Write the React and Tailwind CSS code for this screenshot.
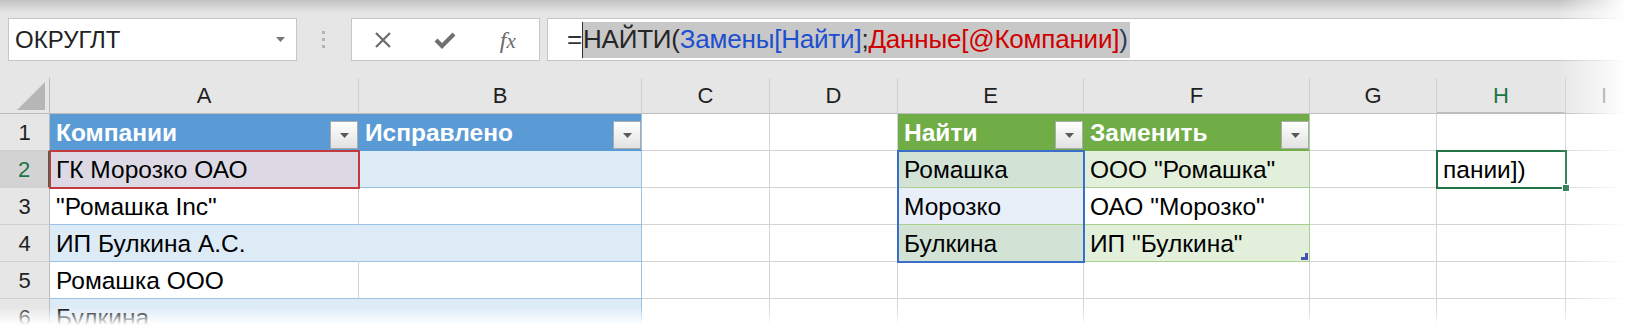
import React from "react";

// colours taken from the Excel screenshot
const W = "bg-white border-r-[#d4d4d4] border-b-[#d4d4d4]";

const columns = [
  { name: "A", cls: "" },
  { name: "B", cls: "" },
  { name: "C", cls: "" },
  { name: "D", cls: "" },
  { name: "E", cls: "" },
  { name: "F", cls: "" },
  { name: "G", cls: "" },
  { name: "H", cls: "bg-[#d2d2d2] text-[#217346] border-b-2 border-b-[#217346]" },
  { name: "I", cls: "" },
];

const rows = [
  [
    { t: "Компании", c: "bg-[#5b9bd5] border-r-[#5b9bd5] border-b-[#5b9bd5] font-bold text-white", dd: true },
    { t: "Исправлено", c: "bg-[#5b9bd5] border-r-[#9bc2e6] border-b-[#5b9bd5] font-bold text-white", dd: true },
    { c: W },
    { c: W },
    { t: "Найти", c: "bg-[#70ad47] border-r-[#70ad47] border-b-[#70ad47] font-bold text-white", dd: true },
    { t: "Заменить", c: "bg-[#70ad47] border-r-[#a9d08e] border-b-[#70ad47] font-bold text-white", dd: true },
    { c: W },
    { c: W },
    { c: W },
  ],
  [
    { t: "ГК Морозко ОАО", c: "bg-[#dcd9e5] border-r-[#dcd9e5] border-b-[#9bc2e6]" },
    { c: "bg-[#ddebf7] border-r-[#9bc2e6] border-b-[#9bc2e6]" },
    { c: W },
    { c: W },
    { t: "Ромашка", c: "bg-[#d2e3d6] border-r-[#a9d08e] border-b-[#a9d08e]" },
    { t: 'ООО "Ромашка"', c: "bg-[#e2efda] border-r-[#a9d08e] border-b-[#a9d08e]" },
    { c: W },
    { t: "пании])", c: W },
    { c: W },
  ],
  [
    { t: '"Ромашка Inc"', c: "bg-white border-r-[#d4d4d4] border-b-[#9bc2e6]" },
    { c: "bg-white border-r-[#9bc2e6] border-b-[#9bc2e6]" },
    { c: W },
    { c: W },
    { t: "Морозко", c: "bg-[#e9eff9] border-r-[#a9d08e] border-b-[#a9d08e]" },
    { t: 'ОАО "Морозко"', c: "bg-white border-r-[#a9d08e] border-b-[#a9d08e]" },
    { c: W },
    { c: W },
    { c: W },
  ],
  [
    { t: "ИП Булкина А.С.", c: "bg-[#ddebf7] border-r-[#ddebf7] border-b-[#9bc2e6]" },
    { c: "bg-[#ddebf7] border-r-[#9bc2e6] border-b-[#9bc2e6]" },
    { c: W },
    { c: W },
    { t: "Булкина", c: "bg-[#d2e3d6] border-r-[#a9d08e] border-b-[#a9d08e]" },
    { t: 'ИП "Булкина"', c: "bg-[#e2efda] border-r-[#a9d08e] border-b-[#a9d08e]", handle: true },
    { c: W },
    { c: W },
    { c: W },
  ],
  [
    { t: "Ромашка ООО", c: "bg-white border-r-[#d4d4d4] border-b-[#9bc2e6]" },
    { c: "bg-white border-r-[#9bc2e6] border-b-[#9bc2e6]" },
    { c: W },
    { c: W },
    { c: W },
    { c: W },
    { c: W },
    { c: W },
    { c: W },
  ],
  [
    { t: "Булкина", c: "bg-[#ddebf7] border-r-[#ddebf7] border-b-[#9bc2e6]" },
    { c: "bg-[#ddebf7] border-r-[#9bc2e6] border-b-[#9bc2e6]" },
    { c: W },
    { c: W },
    { c: W },
    { c: W },
    { c: W },
    { c: W },
    { c: W },
  ],
];

const Triangle = ({ color = "#595959" }) => (
  <svg width="9" height="5" viewBox="0 0 9 5">
    <polygon points="0,0 9,0 4.5,5" fill={color} />
  </svg>
);

const FilterButton = () => (
  <div className="ml-auto mb-[1px] flex h-[28px] w-[28px] shrink-0 items-center justify-center self-end border border-[#ababab] bg-gradient-to-b from-white to-[#e2e2e2]">
    <Triangle />
  </div>
);

const Cell = ({ cell }) => (
  <div
    className={`relative flex items-center whitespace-nowrap border-r border-b pl-[6px] pt-[3px] text-[24.5px] leading-none text-black ${cell.c}`}
  >
    <span className={cell.dd ? "pb-[1px]" : ""}>{cell.t}</span>
    {cell.dd && <FilterButton />}
    {cell.handle && (
      <svg className="absolute right-[1px] bottom-[1px]" width="7" height="7" viewBox="0 0 7 7">
        <polygon points="7,0 7,7 0,7 0,4 4,4 4,0" fill="#4653b3" />
      </svg>
    )}
  </div>
);

const FormulaBar = () => (
  <div className="flex h-[78px] items-start bg-[linear-gradient(to_bottom,#c2c2c2,#e6e6e6_13px)] pt-[18px]">
    {/* name box */}
    <div className="ml-[8px] flex h-[43px] w-[289px] items-center border border-[#c6c6c6] bg-white pl-[6px] pr-[11px]">
      <span className="text-[24px] text-[#222]">ОКРУГЛТ</span>
      <span className="ml-auto">
        <Triangle color="#777" />
      </span>
    </div>

    {/* grip dots */}
    <div className="ml-[25px] flex h-[43px] flex-col items-center justify-center gap-[4px]">
      <span className="h-[3px] w-[3px] bg-[#b5b5b5]" />
      <span className="h-[3px] w-[3px] bg-[#b5b5b5]" />
      <span className="h-[3px] w-[3px] bg-[#b5b5b5]" />
    </div>

    {/* cancel / enter / fx */}
    <div className="ml-[26px] grid h-[43px] w-[189px] grid-cols-3 items-center border border-[#c6c6c6] bg-white">
      <div className="flex justify-center">
        <svg width="18" height="18" viewBox="0 0 18 18">
          <path d="M2 2 L16 16 M16 2 L2 16" stroke="#6b6b6b" strokeWidth="2.2" />
        </svg>
      </div>
      <div className="flex justify-center">
        <svg width="22" height="18" viewBox="0 0 22 18">
          <path d="M2 9 L8 15 L20 3" stroke="#707070" strokeWidth="4.2" fill="none" strokeLinejoin="miter" />
        </svg>
      </div>
      <div className="flex items-baseline justify-center font-['Liberation_Serif',serif] text-[24px] italic leading-none text-[#6b6b6b]">
        <span>f</span>
        <span className="text-[21px]">x</span>
      </div>
    </div>

    {/* formula */}
    <div className="ml-[7px] flex h-[43px] flex-1 items-center border border-[#c6c6c6] bg-white pl-[19px] text-[26px] tracking-[-0.2px] text-[#333]">
      <span>=</span>
      <span className="flex h-[36px] items-center border-l border-l-[#333] bg-[#c8c8c8] pr-[2px]">
        <span className="text-[#262626]">НАЙТИ(</span>
        <span className="text-[#1d4fcf]">Замены[Найти]</span>
        <span className="text-[#262626]">;</span>
        <span className="text-[#d00000]">Данные[@Компании]</span>
        <span className="text-[#2c3e5c]">)</span>
      </span>
    </div>
  </div>
);

export default function App() {
  return (
    <div className="relative h-[325px] w-[1643px] overflow-hidden bg-white font-['Liberation_Sans',Arial,sans-serif]">
      <FormulaBar />

      <div className="relative grid grid-cols-[50px_309px_283px_128px_128px_186px_226px_127px_129px_1fr] grid-rows-[36px_repeat(6,37px)]">
        {/* select-all corner */}
        <div className="flex items-end justify-end border-r border-b border-r-[#bdbdbd] border-b-[#bdbdbd] bg-[#e6e6e6] pr-[4px] pb-[3px]">
          <svg width="28" height="28" viewBox="0 0 28 28">
            <polygon points="28,0 28,28 0,28" fill="#b6b6b6" />
          </svg>
        </div>
        {columns.map((col) => (
          <div
            key={col.name}
            className={`flex items-center justify-center border-r border-b border-r-[#cfcfcf] border-b-[#bdbdbd] bg-[#e6e6e6] text-[22px] text-[#1f1f1f] ${col.cls}`}
          >
            {col.name}
          </div>
        ))}

        {rows.map((row, i) => (
          <React.Fragment key={i}>
            <div
              className={
                i === 1
                  ? "flex items-center justify-center border-r-2 border-b border-r-[#217346] border-b-[#d0d0d0] bg-[#d3d3d3] text-[22px] text-[#217346]"
                  : "flex items-center justify-center border-r border-b border-r-[#bdbdbd] border-b-[#d0d0d0] bg-[#e6e6e6] text-[22px] text-[#1f1f1f]"
              }
            >
              {i + 1}
            </div>
            {row.map((cell, j) => (
              <Cell key={j} cell={cell} />
            ))}
          </React.Fragment>
        ))}

        {/* reference outlines drawn over the cells */}
        <div className="absolute -inset-px col-start-2 col-end-3 row-start-3 row-end-4 border-2 border-[#c3393f]" />
        <div className="absolute -inset-px col-start-6 col-end-7 row-start-3 row-end-6 border-2 border-[#3a6ec8]" />
        <div className="absolute -inset-px col-start-9 col-end-10 row-start-3 row-end-4 border-2 border-[#217346]">
          <span className="absolute -right-[5px] -bottom-[5px] h-[8px] w-[8px] border border-white bg-[#217346]" />
        </div>
      </div>

      {/* soft edges of the screenshot */}
      <div className="pointer-events-none absolute top-0 right-0 h-full w-[85px] bg-[linear-gradient(to_right,rgba(255,255,255,0),#fff_80%)]" />
      <div className="pointer-events-none absolute bottom-0 left-0 h-[18px] w-full bg-[linear-gradient(to_bottom,rgba(255,255,255,0),#fff_100%)]" />
    </div>
  );
}
